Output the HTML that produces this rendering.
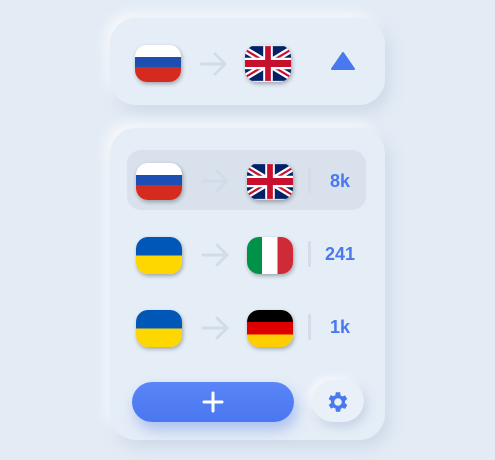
<!DOCTYPE html>
<html><head><style>
body{margin:0;width:495px;height:460px;background:#e3ebf5;font-family:"Liberation Sans",sans-serif;position:relative;overflow:hidden}
.card{position:absolute;background:#e5edf7;border-radius:26px;box-shadow:5px 7px 14px rgba(165,182,208,.35),-5px -5px 12px rgba(255,255,255,.75)}
.flag{position:absolute;width:46px;height:37px;border-radius:12px;overflow:hidden;box-shadow:1px 2px 4px rgba(0,0,0,.3)}
.arrow{position:absolute}
.div{position:absolute;width:3px;height:26px;background:#d3dce8;border-radius:2px}
.num{position:absolute;color:#4a78ee;font-size:18px;font-weight:bold;text-align:center;width:50px}
</style></head><body>
<svg width="0" height="0" style="position:absolute">
<defs>
<g id="uk"><rect width="60" height="30" fill="#012169"/><path d="M0,0L60,30M60,0L0,30" stroke="#fff" stroke-width="6"/><path d="M0,0L60,30M60,0L0,30" stroke="#C8102E" stroke-width="2"/><path d="M30,0V30M0,15H60" stroke="#fff" stroke-width="10"/><path d="M30,0V30M0,15H60" stroke="#C8102E" stroke-width="6"/></g>
<g id="ar"><path d="M2 13H26M16 3L26 13L16 23" fill="none" stroke="#d2dce8" stroke-width="3" stroke-linecap="round" stroke-linejoin="round"/></g>
</defs></svg>

<div class="card" style="left:110px;top:18px;width:275px;height:87px"></div>
<div class="flag" style="left:135px;top:45px;background:linear-gradient(#fff 0 33%,#1d4fb3 33% 60%,#d52b1e 60%)"></div>
<svg class="arrow" style="left:199px;top:51px" width="30" height="26"><use href="#ar"/></svg>
<div class="flag" style="left:245px;top:45px"><svg width="46" height="37" viewBox="6 -1 48 32" preserveAspectRatio="none"><use href="#uk"/></svg></div>
<svg style="position:absolute;left:330px;top:50px" width="26" height="22"><path d="M13 3L24 19H2Z" fill="#4a78ee" stroke="#4a78ee" stroke-width="2" stroke-linejoin="round"/></svg>

<div class="card" style="left:110px;top:128px;width:275px;height:312px"></div>
<div style="position:absolute;left:127px;top:150px;width:239px;height:60px;background:#d8e1ec;border-radius:14px"></div>

<div class="flag" style="left:136px;top:163px;background:linear-gradient(#fff 0 33%,#1d4fb3 33% 60%,#d52b1e 60%)"></div>
<svg class="arrow" style="left:201px;top:168px" width="30" height="26"><use href="#ar"/></svg>
<div class="flag" style="left:247px;top:163px"><svg width="46" height="37" viewBox="6 -1 48 32" preserveAspectRatio="none"><use href="#uk"/></svg></div>
<div class="div" style="left:308px;top:168px"></div>
<div class="num" style="left:315px;top:171px">8k</div>

<div class="flag" style="left:136px;top:237px;background:linear-gradient(#0057b7 0 50%,#ffd700 50%)"></div>
<svg class="arrow" style="left:201px;top:242px" width="30" height="26"><use href="#ar"/></svg>
<div class="flag" style="left:247px;top:237px;background:linear-gradient(90deg,#009246 0 33%,#fff 33% 66%,#ce2b37 66%)"></div>
<div class="div" style="left:308px;top:241px"></div>
<div class="num" style="left:315px;top:244px">241</div>

<div class="flag" style="left:136px;top:310px;background:linear-gradient(#0057b7 0 50%,#ffd700 50%)"></div>
<svg class="arrow" style="left:201px;top:315px" width="30" height="26"><use href="#ar"/></svg>
<div class="flag" style="left:247px;top:310px;background:linear-gradient(#000 0 33%,#dd0000 33% 66%,#ffce00 66%)"></div>
<div class="div" style="left:308px;top:314px"></div>
<div class="num" style="left:315px;top:317px">1k</div>

<div style="position:absolute;left:132px;top:382px;width:162px;height:40px;border-radius:20px;background:linear-gradient(#5a86f8,#4a76f0);box-shadow:3px 8px 14px rgba(70,110,220,.35)"></div>
<svg style="position:absolute;left:202px;top:391px" width="22" height="22"><path d="M11 2V20M2 11H20" stroke="#fff" stroke-width="3" stroke-linecap="round"/></svg>
<div style="position:absolute;left:312px;top:380px;width:52px;height:42px;border-radius:21px;background:#e9f0f8;box-shadow:3px 5px 10px rgba(160,178,205,.45),-3px -3px 8px rgba(255,255,255,.8)"></div>
<svg style="position:absolute;left:325px;top:389px" width="26" height="26" viewBox="0 0 24 24"><path fill="#4a78ee" d="M19.4 13a7.5 7.5 0 0 0 0-2l2.1-1.6-2-3.5-2.5 1a7 7 0 0 0-1.7-1L15 3h-4l-.4 2.7a7 7 0 0 0-1.7 1l-2.5-1-2 3.5L6.6 11a7.5 7.5 0 0 0 0 2l-2.1 1.6 2 3.5 2.5-1a7 7 0 0 0 1.7 1L11 21h4l.4-2.7a7 7 0 0 0 1.7-1l2.5 1 2-3.5zM13 15.5a3.5 3.5 0 1 1 0-7 3.5 3.5 0 0 1 0 7z" transform="translate(-1 0)"/></svg>
</body></html>
